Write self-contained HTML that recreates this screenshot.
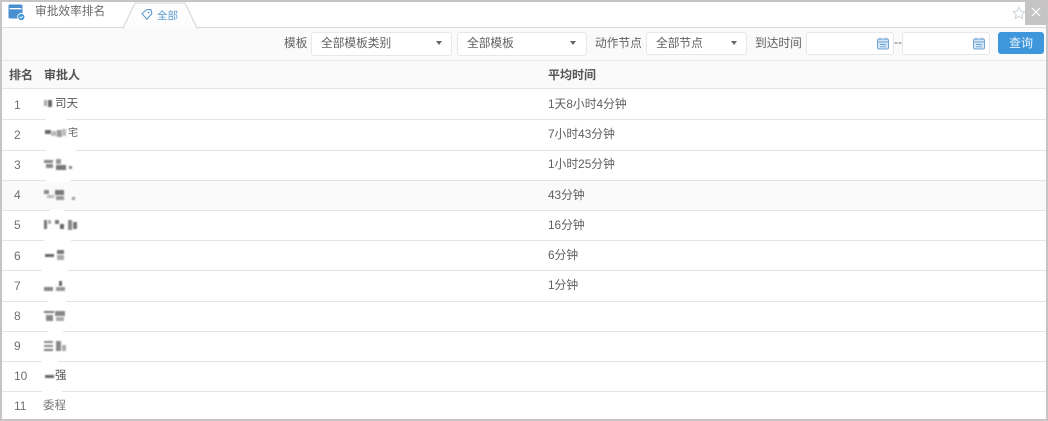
<!DOCTYPE html>
<html><head><meta charset="utf-8">
<style>
html,body{margin:0;padding:0;background:#fff}
body{width:1048px;height:421px;position:relative;overflow:hidden;font-family:"Liberation Sans","Noto Sans CJK SC",sans-serif;font-size:12px;color:#5f5f5f}
#w{position:absolute;left:0;top:0;width:1048px;height:421px;filter:blur(.35px)}
.a{position:absolute;white-space:nowrap}
.line{position:absolute;left:2px;width:1044px;height:1px;background:#e4e4e4}
.gap{position:absolute;height:2px;background:#fff}
.n{position:absolute;left:14px;color:#707070;line-height:16px}
.t{position:absolute;left:548px;color:#5f5f5f;line-height:16px;font-size:11.8px}
.sel{position:absolute;top:32px;height:22px;background:#fff;border:1px solid #e8e8e8;border-radius:3px;line-height:22px;color:#5f5f5f;text-indent:9px;font-size:11.7px}
.sel i{position:absolute;top:8px;width:0;height:0;border-left:3.5px solid transparent;border-right:3.5px solid transparent;border-top:4px solid #666}
.p{position:absolute;filter:blur(.7px)}
</style></head>
<body>
<div id="w">
<div class="a" style="left:2px;top:27px;width:1044px;height:1px;background:#dcdcdc"></div>
<div class="a" style="left:2px;top:28px;width:1044px;height:32px;background:#fafafa"></div>
<div class="a" style="left:2px;top:60px;width:1044px;height:29px;background:#fafafa"></div>
<div class="a" style="left:2px;top:60px;width:1044px;height:1px;background:#e8e8e8"></div>

<svg class="a" style="left:8px;top:4px" width="18" height="17" viewBox="0 0 18 17">
<rect x="0.5" y="0.5" width="14" height="14" rx="1.5" fill="#4a8fd0"/>
<rect x="1.5" y="4" width="12" height="1.3" fill="#fff"/>
<circle cx="13.3" cy="13" r="3.6" fill="#3f97dc" stroke="#fff" stroke-width=".9"/>
<path d="M11.8 13l1.1 1.1 2-2" fill="none" stroke="#fff" stroke-width=".9"/>
</svg>
<div class="a" style="left:35px;top:3px;font-size:11.7px;line-height:17px;color:#6a6a6a">审批效率排名</div>

<svg class="a" style="left:120px;top:2px" width="80" height="27" viewBox="0 0 80 27">
<path d="M2 26H3L15 1H65L77 26H79" fill="#fdfdfd" stroke="#d4d4d4" stroke-width="1"/>
<path d="M22 11.5l5-4 4 .2 .8 4-5 5.6z" fill="none" stroke="#5b9bd0" stroke-width="1.1"/>
<circle cx="28.6" cy="10.6" r=".8" fill="#5b9bd0"/>
</svg>
<div class="a" style="left:157px;top:9px;font-size:10.5px;line-height:15px;color:#5b9bd0">全部</div>

<svg class="a" style="left:1012px;top:6px" width="14" height="14" viewBox="0 0 14 14"><path d="M7 1.2l1.8 3.8 4.1.5-3 2.8.8 4.1L7 10.4l-3.7 2 .8-4.1-3-2.8 4.1-.5z" fill="none" stroke="#ccd3da" stroke-width="1"/></svg>
<div class="a" style="left:1025px;top:2px;width:21px;height:23px;background:#c4c4c4"></div>
<svg class="a" style="left:1031px;top:7px" width="10" height="10" viewBox="0 0 10 10"><path d="M1 1l8 8M9 1l-8 8" stroke="#fff" stroke-width="1.2"/></svg>

<div class="a" style="left:284px;top:35px;line-height:17px;font-size:11.7px">模板</div>
<div class="sel" style="left:311px;width:139px">全部模板类别<i style="left:124px"></i></div>
<div class="sel" style="left:457px;width:128px">全部模板<i style="left:112px"></i></div>
<div class="a" style="left:595px;top:35px;line-height:17px;font-size:11.7px">动作节点</div>
<div class="sel" style="left:646px;width:99px;height:21px;line-height:21px">全部节点<i style="left:84px"></i></div>
<div class="a" style="left:755px;top:35px;line-height:17px;font-size:11.7px">到达时间</div>
<div class="sel" style="left:806px;width:86px;height:21px"></div>
<div class="a" style="left:894px;top:34px;line-height:17px;color:#666">--</div>
<div class="sel" style="left:902px;width:86px;height:21px"></div>
<svg class="a" style="left:877px;top:37px" width="12" height="13" viewBox="0 0 12 13"><rect x=".5" y="2" width="11" height="10" rx="1.5" fill="#d5e6f5" stroke="#6ea6d6"/><path d="M.5 5h11M3 .5v2.5M9 .5v2.5M3 7.5h6M3 9.8h6" stroke="#6ea6d6" stroke-width=".9"/></svg>
<svg class="a" style="left:973px;top:37px" width="12" height="13" viewBox="0 0 12 13"><rect x=".5" y="2" width="11" height="10" rx="1.5" fill="#d5e6f5" stroke="#6ea6d6"/><path d="M.5 5h11M3 .5v2.5M9 .5v2.5M3 7.5h6M3 9.8h6" stroke="#6ea6d6" stroke-width=".9"/></svg>
<div class="a" style="left:998px;top:32px;width:46px;height:22px;background:#3e97db;border-radius:3px;color:#e8f3fb;text-align:center;line-height:22px">查询</div>

<div class="a" style="left:9px;top:67px;font-weight:bold;color:#555;line-height:16px">排名</div>
<div class="a" style="left:44px;top:67px;font-weight:bold;color:#555;line-height:16px">审批人</div>
<div class="a" style="left:548px;top:67px;font-weight:bold;color:#555;line-height:16px">平均时间</div>

<div class="line" style="top:88px"></div><div class="line" style="top:119px"></div><div class="line" style="top:150px"></div><div class="line" style="top:180px"></div><div class="line" style="top:210px"></div><div class="line" style="top:240px"></div><div class="line" style="top:270px"></div><div class="line" style="top:301px"></div><div class="line" style="top:331px"></div><div class="line" style="top:361px"></div><div class="line" style="top:391px"></div>
<div class="a" style="left:2px;top:181px;width:1044px;height:29px;background:#fafafa"></div>
<div class="gap" style="left:46px;top:118.5px;width:20px"></div>
<div class="gap" style="left:46px;top:149.5px;width:30px"></div>
<div class="gap" style="left:46px;top:179.5px;width:24px"></div>
<div class="gap" style="left:50px;top:209.5px;width:14px"></div>
<div class="gap" style="left:44px;top:239.5px;width:27px"></div>
<div class="gap" style="left:42px;top:269.5px;width:26px"></div>
<div class="gap" style="left:48px;top:300.5px;width:18px"></div>
<div class="gap" style="left:48px;top:330.5px;width:15px"></div>
<div class="gap" style="left:42px;top:360.5px;width:16px"></div>
<div class="gap" style="left:42px;top:390.5px;width:20px"></div>

<div class="n" style="top:97px">1</div><div class="n" style="top:127px">2</div><div class="n" style="top:157px">3</div><div class="n" style="top:187px">4</div><div class="n" style="top:217px">5</div><div class="n" style="top:248px">6</div><div class="n" style="top:278px">7</div><div class="n" style="top:308px">8</div><div class="n" style="top:338px">9</div><div class="n" style="top:368px">10</div><div class="n" style="top:398px">11</div>

<div class="t" style="top:96px">1天8小时4分钟</div>
<div class="t" style="top:126px">7小时43分钟</div>
<div class="t" style="top:156px">1小时25分钟</div>
<div class="t" style="top:187px">43分钟</div>
<div class="t" style="top:217px">16分钟</div>
<div class="t" style="top:247px">6分钟</div>
<div class="t" style="top:277px">1分钟</div>

<!-- row 1 -->
<div class="p" style="left:44px;top:100px;width:3px;height:6px;background:#aaa"></div>
<div class="p" style="left:48px;top:100px;width:4px;height:7px;background:#666"></div>
<div class="a" style="left:55px;top:96px;width:23px;line-height:16px;font-size:11.5px;color:#555;text-align:right">司天</div>
<!-- row 2 -->
<div class="p" style="left:45px;top:130px;width:6px;height:4px;background:#666"></div>
<div class="p" style="left:51px;top:131px;width:6px;height:5px;background:#bbb"></div>
<div class="p" style="left:57px;top:130px;width:5px;height:7px;background:#999"></div>
<div class="p" style="left:62px;top:129px;width:4px;height:7px;background:#bbb"></div>
<div class="a" style="left:68px;top:126px;line-height:16px;font-size:10px;color:#666">宅</div>
<!-- row 3 -->
<div class="p" style="left:44px;top:160px;width:9px;height:3px;background:#888"></div>
<div class="p" style="left:46px;top:164px;width:7px;height:4px;background:#888"></div>
<div class="p" style="left:56px;top:159px;width:5px;height:5px;background:#999"></div>
<div class="p" style="left:56px;top:165px;width:10px;height:5px;background:#777"></div>
<div class="p" style="left:69px;top:166px;width:3px;height:3px;background:#888"></div>
<!-- row 4 -->
<div class="p" style="left:44px;top:190px;width:5px;height:4px;background:#888"></div>
<div class="p" style="left:47px;top:195px;width:7px;height:3px;background:#bbb"></div>
<div class="p" style="left:55px;top:190px;width:9px;height:5px;background:#777"></div>
<div class="p" style="left:56px;top:196px;width:8px;height:4px;background:#999"></div>
<div class="p" style="left:72px;top:197px;width:3px;height:3px;background:#999"></div>
<!-- row 5 -->
<div class="p" style="left:44px;top:220px;width:3px;height:9px;background:#777"></div>
<div class="p" style="left:48px;top:220px;width:3px;height:4px;background:#aaa"></div>
<div class="p" style="left:55px;top:220px;width:4px;height:4px;background:#777"></div>
<div class="p" style="left:60px;top:224px;width:4px;height:5px;background:#666"></div>
<div class="p" style="left:68px;top:220px;width:4px;height:10px;background:#888"></div>
<div class="p" style="left:73px;top:222px;width:4px;height:7px;background:#777"></div>
<!-- row 6 -->
<div class="p" style="left:45px;top:254px;width:9px;height:3px;background:#666"></div>
<div class="p" style="left:57px;top:250px;width:7px;height:4px;background:#777"></div>
<div class="p" style="left:57px;top:255px;width:7px;height:5px;background:#aaa"></div>
<!-- row 7 -->
<div class="p" style="left:44px;top:287px;width:9px;height:4px;background:#888"></div>
<div class="p" style="left:59px;top:281px;width:3px;height:5px;background:#666"></div>
<div class="p" style="left:56px;top:287px;width:9px;height:4px;background:#999"></div>
<!-- row 8 -->
<div class="p" style="left:44px;top:311px;width:10px;height:2px;background:#777"></div>
<div class="p" style="left:46px;top:315px;width:7px;height:6px;background:#888"></div>
<div class="p" style="left:55px;top:311px;width:10px;height:5px;background:#888"></div>
<div class="p" style="left:56px;top:317px;width:8px;height:4px;background:#aaa"></div>
<!-- row 9 -->
<div class="p" style="left:44px;top:341px;width:9px;height:2px;background:#888"></div>
<div class="p" style="left:44px;top:345px;width:9px;height:2px;background:#888"></div>
<div class="p" style="left:44px;top:349px;width:9px;height:2px;background:#777"></div>
<div class="p" style="left:56px;top:341px;width:5px;height:10px;background:#888"></div>
<div class="p" style="left:62px;top:345px;width:4px;height:6px;background:#aaa"></div>
<!-- row 10 -->
<div class="p" style="left:45px;top:375px;width:9px;height:3px;background:#666"></div>
<div class="a" style="left:55px;top:368px;line-height:16px;font-size:11.5px;color:#555">强</div>
<!-- row 11 -->
<div class="a" style="left:43px;top:398px;line-height:16px;font-size:11.5px;color:#777">委程</div>
</div>

<div class="a" style="left:0;top:0;width:1048px;height:2px;background:#c9c4c4"></div>
<div class="a" style="left:0;top:419px;width:1048px;height:2px;background:#c9c4c4"></div>
<div class="a" style="left:0;top:0;width:2px;height:421px;background:#c9c4c4"></div>
<div class="a" style="left:1046px;top:0;width:2px;height:421px;background:#c9c4c4"></div>
</body></html>
